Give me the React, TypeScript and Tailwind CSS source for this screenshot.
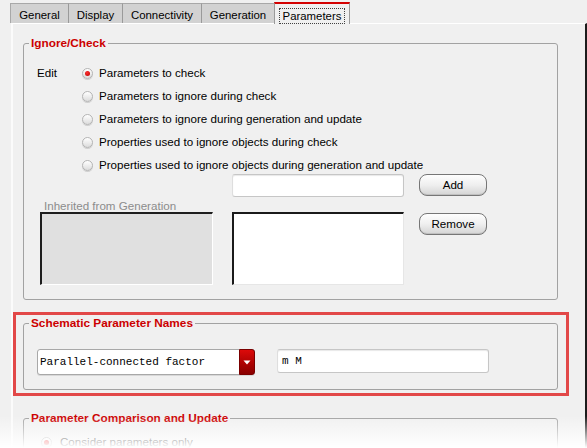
import React from "react";

const Radio = ({ checked }: { checked?: boolean }) => (
  <span className="flex items-center justify-center w-[11px] h-[11px] shrink-0 rounded-full border border-[#b4b4b4] bg-linear-to-b from-white to-[#dcdcdc] shadow-[0_1px_0_#d0d0d0]">
    {checked && (
      <span className="w-[5px] h-[5px] rounded-full bg-[radial-gradient(circle_at_40%_35%,#ff3030,#b80000)]" />
    )}
  </span>
);

const Tab = ({ label, w, first }: { label: string; w: string; first?: boolean }) => (
  <div
    className={`${w} h-[20px] flex items-center justify-center pt-[4px] bg-[#d2d2d2] border-t border-t-[#a8a8a8] border-l ${first ? "border-l-[#a8a8a8]" : "border-l-[#9a9a9a]"}`}
  >
    {label}
  </div>
);

const Legend = ({ children }: { children: React.ReactNode }) => (
  <div className="-mt-[8px] ml-[5px] w-fit px-[2px] h-[15px] leading-[15px] bg-[#f0f0f0] font-bold text-[11.8px] text-[#cc0000]">
    {children}
  </div>
);

const Button = ({ label, className }: { label: string; className?: string }) => (
  <div
    className={`h-[22px] flex items-center justify-center rounded-[8px] border border-[#767676] bg-linear-to-b from-[#fefefe] via-[#efefef] to-[#d4d4d4] shadow-[inset_0_-1px_0_#c0c0c0] ${className ?? ""}`}
  >
    {label}
  </div>
);

const radios = [
  "Parameters to check",
  "Parameters to ignore during check",
  "Parameters to ignore during generation and update",
  "Properties used to ignore objects during check",
  "Properties used to ignore objects during generation and update",
];

export default function App() {
  return (
    <div className="relative w-[587px] h-[448px] overflow-hidden bg-[#f0f0f0] font-['Liberation_Sans',Arial,sans-serif] text-[11.6px] text-black">
      {/* Tabs */}
      <div className="relative z-10 flex items-end h-[23px] pl-[10px] text-[11.4px]">
        <Tab label="General" w="w-[58px]" first />
        <Tab label="Display" w="w-[54px]" />
        <Tab label="Connectivity" w="w-[79px]" />
        <Tab label="Generation" w="w-[73px]" />
        <div className="w-[76px] h-[22px] -mb-px flex items-center justify-center bg-[#f0f0f0] border-t-2 border-t-[#d40000] border-x border-x-[#9a9a9a] pt-[3px]">
          <span className="px-[3px] leading-[14px] border border-dotted border-[#404040]">Parameters</span>
        </div>
      </div>

      {/* Panel */}
      <div className="ml-[11px] w-[576px] h-[425px] border-t border-t-white border-l-2 border-l-[#fbfbfb] border-r-2 border-r-[#1c1c1c]">
        {/* Ignore/Check */}
        <div className="mt-[19px] ml-[10px] w-[535px] border border-[#a2a2a2] rounded-[3px] pb-[14px]">
          <Legend>Ignore/Check</Legend>
          <div className="mt-[13px] flex">
            <div className="w-[58px] pl-[13px] h-[18px] flex items-center">Edit</div>
            <div className="flex flex-col gap-[5px]">
              {radios.map((r, i) => (
                <div key={r} className="h-[18px] flex items-center gap-[6px]">
                  <Radio checked={i === 0} />
                  <span>{r}</span>
                </div>
              ))}
            </div>
          </div>
          <div className="flex pl-[16px]">
            <div className="w-[173px] pt-[25px]">
              <div className="h-[13px] leading-[13px] pl-[4px] text-[#8c8c8c]">Inherited from Generation</div>
              <div className="h-[73px] bg-[#e0e0e0] border-t-2 border-l-2 border-t-[#1e1e1e] border-l-[#1e1e1e] border-r border-b border-r-white border-b-white" />
            </div>
            <div className="ml-[19px] w-[172px]">
              <div className="h-[23px] bg-white border border-[#c6c6c6] border-l-[#dedede] rounded-[3px] shadow-[inset_0_1px_1px_#e8e8e8]" />
              <div className="mt-[15px] h-[73px] bg-white border-t-2 border-l-2 border-t-[#1a1a1a] border-l-[#1a1a1a] border-r border-b border-r-[#e6e6e6] border-b-[#e6e6e6]" />
            </div>
            <div className="ml-[15px] w-[68px]">
              <Button label="Add" />
              <Button label="Remove" className="mt-[17px]" />
            </div>
          </div>
        </div>

        {/* Schematic Parameter Names (highlighted) */}
        <div className="mt-[12px] w-[556px] border-[3px] border-[#e24848] pb-[3px]">
          <div className="mt-[8px] ml-[7px] w-[535px] border border-[#a2a2a2] rounded-[3px] pb-[14px]">
            <Legend>Schematic Parameter Names</Legend>
            <div className="mt-[18px] flex items-start">
              <div className="ml-[13px] w-[218px] h-[26px] flex rounded-[3px] border border-[#a8a8a8] bg-white shadow-[0_1px_0_#d8d8d8]">
                <div className="flex-1 flex items-center pl-[2px] font-['Liberation_Mono',monospace] text-[11px]">
                  Parallel-connected factor
                </div>
                <div className="w-[16px] -my-px -mr-px flex items-center justify-center rounded-r-[3px] bg-linear-to-b from-[#dc0a0a] to-[#8a0000] border border-[#7a0000]">
                  <svg width="8" height="5" viewBox="0 0 8 5">
                    <path d="M0.5 0.5 L7.5 0.5 L4 4.5 Z" fill="#ffffff" />
                  </svg>
                </div>
              </div>
              <div className="ml-[22px] w-[212px] h-[24px] flex items-center pl-[4px] bg-white border border-[#c6c6c6] border-l-[#dedede] rounded-[3px] font-['Liberation_Mono',monospace] text-[11px] shadow-[inset_0_1px_1px_#e8e8e8]">
                m M
              </div>
            </div>
          </div>
        </div>

        {/* Parameter Comparison and Update */}
        <div className="mt-[22px] ml-[10px] w-[535px] h-[60px] border border-[#a2a2a2] rounded-[3px]">
          <Legend>Parameter Comparison and Update</Legend>
          <div className="mt-[7px] ml-[17px] h-[18px] flex items-center gap-[8px]">
            <Radio checked />
            <span>Consider parameters only</span>
          </div>
        </div>
      </div>

      {/* bottom fade */}
      <div className="pointer-events-none absolute left-0 right-0 bottom-0 h-[32px] bg-linear-to-b from-[#ffffff00] to-white" />
    </div>
  );
}
